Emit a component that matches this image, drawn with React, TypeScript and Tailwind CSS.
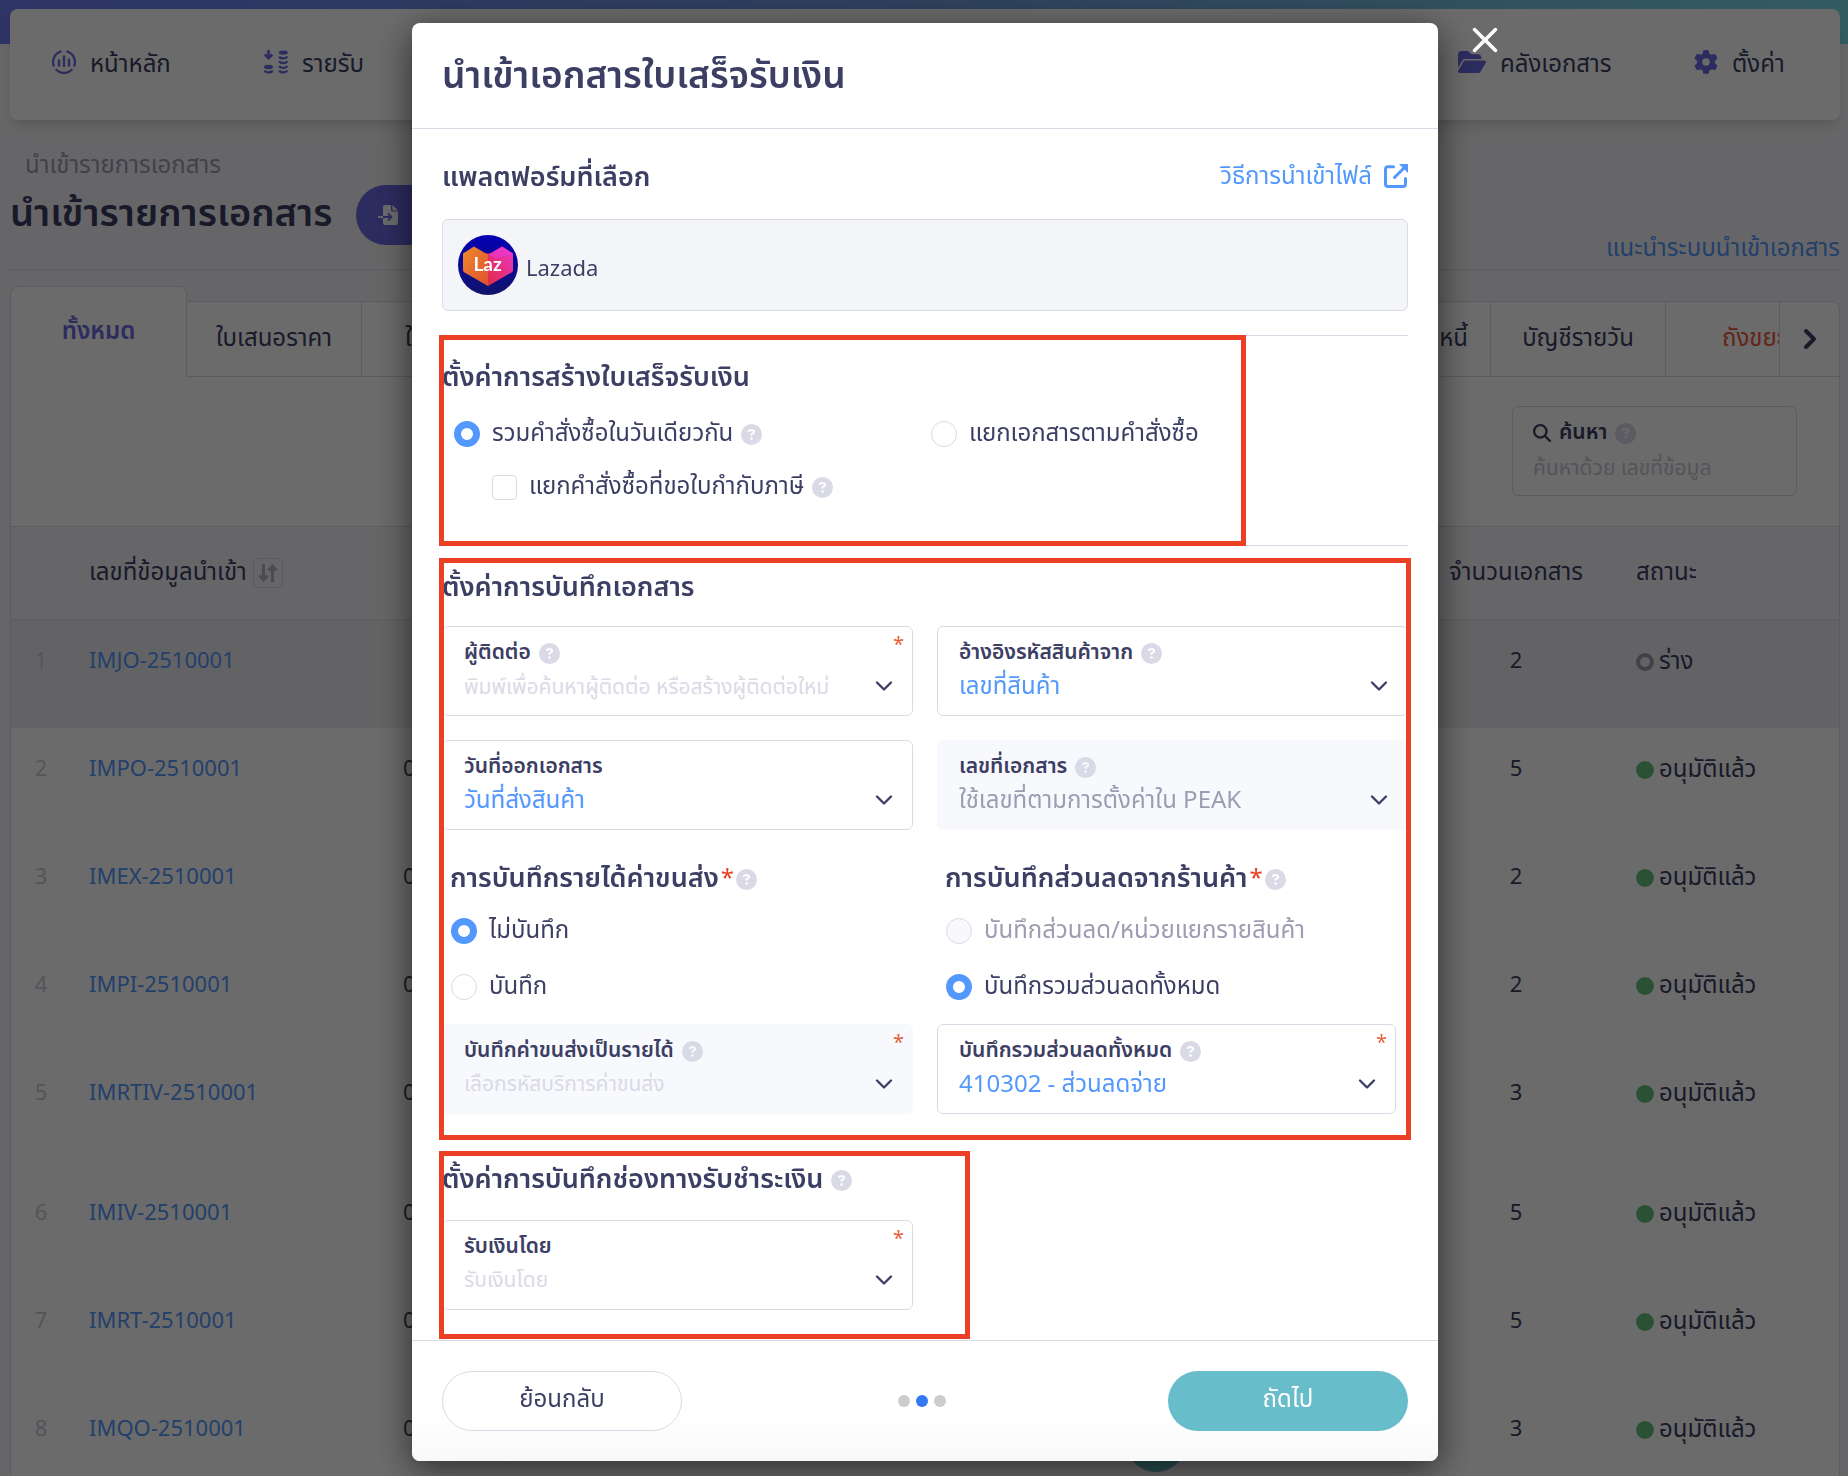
import React from 'react';
import { ChevronDown, ChevronRight, X } from 'lucide-react';
import { FaFolderOpen, FaGear, FaCircleQuestion, FaMagnifyingGlass } from 'react-icons/fa6';
import { clsx } from 'clsx';

interface ImportRow {
  id: string;
  date: string;
  count: number;
  status: 'draft' | 'approved';
}

const rows: ImportRow[] = [
  { id: 'IMJO-2510001', date: '', count: 2, status: 'draft' },
  { id: 'IMPO-2510001', date: '01/10/2025', count: 5, status: 'approved' },
  { id: 'IMEX-2510001', date: '01/10/2025', count: 2, status: 'approved' },
  { id: 'IMPI-2510001', date: '01/10/2025', count: 2, status: 'approved' },
  { id: 'IMRTIV-2510001', date: '01/10/2025', count: 3, status: 'approved' },
  { id: 'IMIV-2510001', date: '01/10/2025', count: 5, status: 'approved' },
  { id: 'IMRT-2510001', date: '01/10/2025', count: 5, status: 'approved' },
  { id: 'IMQO-2510001', date: '01/10/2025', count: 3, status: 'approved' },
];

const HomeIcon = () => (
  <svg viewBox="0 0 24 24" className="h-6 w-6 shrink-0" fill="none" stroke="currentColor" strokeWidth="2.2">
    <path d="M9.5 1.4A11 11 0 0 0 2 16.5M14.5 1.4A11 11 0 0 1 22 16.5M3.8 19.3A11 11 0 0 0 20.2 19.3" />
    <path d="M7 10.5v5M12 6.500v9.500M17 9.500v6" strokeWidth="2.4" strokeLinecap="round" />
  </svg>
);

const CoinsIcon = () => (
  <svg viewBox="0 0 24 24" className="h-6 w-6 shrink-0" fill="none" stroke="currentColor" strokeWidth="2.2">
    <path d="M4.5 0v7M.8 4.5l3.7 3.7 3.7-3.7" strokeWidth="2.6" />
    <ellipse cx="4.5" cy="17" rx="4.5" ry="2.2" fill="currentColor" stroke="none" />
    <ellipse cx="19.3" cy="2.6" rx="4.5" ry="2.2" fill="currentColor" stroke="none" />
    <path d="M.5 20.5c1 2.6 7 2.6 8 0M15.3 6.5c1 2.6 7 2.6 8 0M15.3 11.2c1 2.6 7 2.6 8 0M15.3 15.9c1 2.6 7 2.6 8 0M15.3 20.5c1 2.6 7 2.6 8 0" />
  </svg>
);

const ImportIcon = () => (
  <svg viewBox="0 0 20 20" className="h-5 w-5 shrink-0">
    <path d="M7 0h6v5a1.5 1.5 0 0 0 1.500 1.500H20V18a2 2 0 0 1-2 2H7a2 2 0 0 1-2-2V2a2 2 0 0 1 2-2z" fill="#fff" />
    <path d="M14.500 0 20 5.500h-5.500z" fill="#fff" />
    <path d="M5 12h8M10 8.500l3.500 3.500L10 15.500" fill="none" stroke="#6b69e3" strokeWidth="1.800" />
    <path d="M0 12h5" stroke="#fff" strokeWidth="1.800" />
  </svg>
);

const SortIcon = () => (
  <svg viewBox="0 0 20 20" className="h-5 w-5" fill="none" stroke="currentColor" strokeWidth="3">
    <path d="M5.500 1v16M1.500 12.500 5.500 17l4-4.500M14.500 19V3M10.500 7.500l4-4.500 4 4.500" />
  </svg>
);

const ExternalIcon = () => (
  <svg viewBox="0 0 24 24" className="h-6 w-6 shrink-0" fill="none" stroke="currentColor" strokeWidth="3">
    <path d="M9.500 2.800H4A2.500 2.500 0 0 0 1.500 5.300V20A2.500 2.500 0 0 0 4 22.500H19A2.500 2.500 0 0 0 21.500 20V14.500" strokeLinecap="round" />
    <path d="M10.500 13.500 20 4" strokeLinecap="round" />
    <path d="M15 0h9v9z" fill="currentColor" stroke="none" />
  </svg>
);

const LazadaLogo = () => (
  <svg viewBox="0 0 60 60" className="h-[60px] w-[60px] shrink-0" role="img" aria-label="Lazada">
    <defs>
      <linearGradient id="laz-bg" x1="0" y1="0" x2="0" y2="1">
        <stop offset="0" stopColor="#0500b5" />
        <stop offset="1" stopColor="#10146a" />
      </linearGradient>
      <linearGradient id="laz-left" x1="0" y1="0" x2="1" y2="1">
        <stop offset="0" stopColor="#ee8a2c" />
        <stop offset="1" stopColor="#e0512f" />
      </linearGradient>
      <linearGradient id="laz-right" x1="1" y1="0" x2="0" y2="1">
        <stop offset="0" stopColor="#ea35c8" />
        <stop offset="1" stopColor="#e22b42" />
      </linearGradient>
    </defs>
    <circle cx="30" cy="30" r="30" fill="url(#laz-bg)" />
    <path d="M5 18.500 16 11.500l11 6.500 3 .8V51L6.500 37.500a3 3 0 0 1-1.500-2.600z" fill="url(#laz-left)" />
    <path d="M55 18.500 44 11.500l-11 6.500-3 .8V51l23.500-13.500a3 3 0 0 0 1.500-2.600z" fill="url(#laz-right)" />
    <path d="m30 18.800 3-.8 11-6.500 11 7-17 5z" fill="#ec38dc" opacity=".55" />
    <text x="29.500" y="36" textAnchor="middle" fill="#fff" fontSize="19" fontWeight="700" fontFamily="Lato, sans-serif">
      Laz
    </text>
  </svg>
);

const Help = () => <FaCircleQuestion className="h-[21px] w-[21px] shrink-0 text-[#dadae6]" />;

const Highlight = ({ className }: { className: string }) => (
  <div className={clsx('pointer-events-none absolute border-5 border-[#eb4026]', className)} />
);

interface ChoiceProps {
  name: string;
  label: string;
  checked?: boolean;
  disabled?: boolean;
  help?: boolean;
}

const RadioChoice: React.FC<ChoiceProps> = ({ name, label, checked, disabled, help }) => (
  <div className="flex items-center gap-2">
    <label className={clsx('flex items-center gap-3 text-2xl leading-7', disabled && 'text-[#9c9cb2]')}>
      <input
        type="radio"
        name={name}
        defaultChecked={checked}
        disabled={disabled}
        className="h-[26px] w-[26px] shrink-0 appearance-none rounded-full border border-[#dadae6] bg-white checked:border-7 checked:border-[#5398fd] disabled:bg-[#f8f9fd]"
      />
      {label}
    </label>
    {help && <Help />}
  </div>
);

interface FieldProps {
  id: string;
  label: string;
  value: string;
  tone?: 'value' | 'placeholder' | 'muted';
  help?: boolean;
  required?: boolean;
  disabled?: boolean;
  search?: boolean;
  className?: string;
}

const Field: React.FC<FieldProps> = ({ id, label, value, tone = 'value', help, required, disabled, search, className }) => (
  <div
    className={clsx(
      'relative flex h-[90px] flex-col rounded-md border pt-[14px] pr-[14px] pl-[21px]',
      disabled ? 'border-[#f8f9fd] bg-[#f8f9fd]' : 'border-[#dadae6] bg-white',
      className
    )}
  >
    <div className="flex h-6 items-center gap-2">
      <label htmlFor={id} className="text-[21px] leading-6 font-semibold">{label}</label>
      {help && <Help />}
    </div>
    <div className="flex h-[42px] items-center">
      {search ? (
        <input
          id={id}
          type="text"
          placeholder={value}
          className="h-10 min-w-0 flex-1 bg-transparent pt-0.5 text-[21px] leading-9 outline-none placeholder:text-[#dadae6]"
        />
      ) : (
        <select
          id={id}
          disabled={disabled}
          className={clsx(
            'h-10 min-w-0 flex-1 appearance-none bg-transparent pt-0.5 leading-9 opacity-100 outline-none',
            tone === 'value' && 'text-2xl text-[#5398fd]',
            tone === 'muted' && 'text-2xl text-[#9c9cb2]',
            tone === 'placeholder' && 'text-[21px] text-[#dadae6]'
          )}
        >
          <option>{value}</option>
        </select>
      )}
      <ChevronDown className="pointer-events-none h-7 w-7 shrink-0" strokeWidth={2} />
    </div>
    {required && <span className="absolute top-[6px] right-2 text-xl leading-6 text-[#e8603c]">*</span>}
  </div>
);

const SectionTitle = ({ children }: { children: React.ReactNode }) => (
  <h3 className="text-[27px] leading-8 font-semibold">{children}</h3>
);

const Background = () => (
  <div className="h-screen overflow-hidden bg-[#f4f4f8] text-[#3c3e63]">
    <div className="h-11 bg-linear-to-r from-[#6f7cf0] via-[#7099dd] to-[#79dbe6] pt-[9px] pr-2 pl-[10px]">
      <nav className="flex h-[111px] rounded-lg bg-white px-[42px] pt-[35px] text-2xl leading-9 shadow-lg">
        <a href="#home" className="flex h-9 w-[212px] items-center gap-[14px]">
          <span className="text-[#6b69e3]"><HomeIcon /></span>
          <span className="pt-1.5">หน้าหลัก</span>
        </a>
        <a href="#income" className="flex h-9 flex-1 items-center gap-[14px]">
          <span className="text-[#6b69e3]"><CoinsIcon /></span>
          <span className="pt-1.5">รายรับ</span>
        </a>
        <a href="#files" className="flex h-9 w-[236px] items-center gap-[14px]">
          <FaFolderOpen className="h-7 w-7 text-[#6b69e3]" />
          <span className="pt-1.5">คลังเอกสาร</span>
        </a>
        <a href="#settings" className="flex h-9 w-[104px] items-center gap-[14px]">
          <FaGear className="h-6 w-6 text-[#6b69e3]" />
          <span className="pt-1.5">ตั้งค่า</span>
        </a>
      </nav>
    </div>

    <div className="pt-[106px] pr-2 pl-[10px]">
      <p className="px-[15px] text-2xl leading-8 text-[#9c9cb2]">นำเข้ารายการเอกสาร</p>
      <div className="flex items-start border-b border-[#dadae6] pt-[3px] pb-0.5">
        <h1 className="text-[38px] leading-[60px] font-semibold">นำเข้ารายการเอกสาร</h1>
        <button aria-label="นำเข้า" className="ml-6 flex h-[60px] w-[200px] items-center rounded-full bg-[#6b69e3] px-[22px]">
          <ImportIcon />
        </button>
        <a href="#guide" className="mt-[46px] ml-auto text-2xl leading-9 text-[#5398fd]">แนะนำระบบนำเข้าเอกสาร</a>
      </div>

      {/* Tabs */}
      <div className="mt-4 flex items-end text-2xl leading-9">
        <button className="h-[91px] w-[177px] rounded-t-lg border border-b-0 border-[#dadae6] bg-white font-semibold text-[#6b69e3]">ทั้งหมด</button>
        <div className="flex h-[76px] flex-1 rounded-tr-lg border border-l-0 border-[#dadae6] bg-white">
          <button className="w-[175px] border-r border-[#dadae6]">ใบเสนอราคา</button>
          <button className="flex-1 pl-[43px] text-left">ใบแจ้งหนี้</button>
          <button className="w-[175px] border-r border-[#dadae6] pr-[22px] text-right">ใบลดหนี้</button>
          <button className="w-[175px] border-r border-[#dadae6]">บัญชีรายวัน</button>
          <button className="w-[114px] overflow-hidden border-r border-[#dadae6] pl-[56px] text-left whitespace-nowrap text-[#ee5a3a]">ถังขยะ</button>
          <button aria-label="ถัดไป" className="flex w-[59px] items-center justify-center">
            <ChevronRight className="h-8 w-8" strokeWidth={3} />
          </button>
        </div>
      </div>

      <div className="border-x border-[#dadae6] bg-white">
        <div className="flex justify-end px-[42px] pt-[29px] pb-[30px]">
          <div className="h-[90px] w-[285px] rounded-md border border-[#dadae6] px-5 pt-3">
            <label htmlFor="search" className="flex items-center gap-2 text-[21px] leading-7 font-semibold">
              <FaMagnifyingGlass className="h-[18px] w-[18px]" />ค้นหา<Help />
            </label>
            <input id="search" placeholder="ค้นหาด้วย เลขที่ข้อมูล" className="h-11 w-full text-[21px] leading-11 placeholder:text-[#c9c9d6]" />
          </div>
        </div>
        <table className="w-full table-fixed text-left text-[22px]">
          <colgroup>
            <col className="w-[60px]" />
            <col className="w-[332px]" />
            <col />
            <col className="w-[160px]" />
            <col className="w-[243px]" />
          </colgroup>
          <thead>
            <tr className="h-[93px] border-y border-[#dadae6] bg-[#f4f4f8] text-2xl">
              <th />
              <th className="pl-[18px] font-normal">
                <span className="flex items-center gap-1.5">
                  เลขที่ข้อมูลนำเข้า
                  <button aria-label="เรียงลำดับ" className="rounded-sm border border-[#dadae6] p-1 text-[#b4b4c4]"><SortIcon /></button>
                </span>
              </th>
              <th />
              <th className="text-center font-normal">จำนวนเอกสาร</th>
              <th className="pl-10 font-normal">สถานะ</th>
            </tr>
          </thead>
          <tbody>
            {rows.map((row, i) => (
              <tr key={row.id} className={clsx('align-top leading-9', i === 4 ? 'h-[120px]' : 'h-[108px]', i === 0 && 'bg-[#ededf0]')}>
                <td className="pt-6 text-center text-[#c9c9d6]">{i + 1}</td>
                <td className="pt-6 pl-[18px]"><a href={`#${row.id}`} className="text-[#5398fd]">{row.id}</a></td>
                <td className="pt-6">{row.date}</td>
                <td className="pt-6 text-center">{row.count}</td>
                <td className="pt-6 pl-10 text-2xl leading-9">
                  <span className="flex items-center gap-[5px]">
                    <span className={clsx('h-[18px] w-[18px] rounded-full', row.status === 'draft' ? 'border-4 border-[#9c9cb2]' : 'bg-[#67c17c]')} />
                    {row.status === 'draft' ? 'ร่าง' : 'อนุมัติแล้ว'}
                  </span>
                </td>
              </tr>
            ))}
          </tbody>
        </table>
      </div>
    </div>
    <button aria-label="แชท" className="fixed right-[662px] bottom-1 h-[60px] w-[60px] rounded-full bg-[#67bdc9]" />
  </div>
);

export default function App() {
  return (
    <div className="font-['Noto_Sans_Thai','Noto_Sans',sans-serif]">
      <Background />
      <div className="fixed inset-0 flex items-start justify-center bg-black/58 pt-[23px] pl-0.5 text-[#3c3e63]">
        <div role="dialog" aria-labelledby="dialog-title" className="relative w-[1026px] rounded-lg bg-white shadow-[0_8px_36px_rgba(0,0,0,0.6)]">
          <button aria-label="ปิด" className="absolute -top-1 -right-[68px] text-white">
            <X className="h-[42px] w-[42px]" strokeWidth={2} />
          </button>

          <header className="border-b border-[#dadae6] px-[30px] pt-7 pb-6">
            <h2 id="dialog-title" className="text-[37px] leading-[53px] font-semibold">นำเข้าเอกสารใบเสร็จรับเงิน</h2>
          </header>

          <div className="px-[30px]">
            <div className="flex items-center justify-between pt-[33px] pb-[25px]">
              <SectionTitle>แพลตฟอร์มที่เลือก</SectionTitle>
              <a href="#how-to" className="flex h-8 items-center gap-3 pb-1 text-2xl leading-8 text-[#5398fd]">
                <span className="pt-0.5">วิธีการนำเข้าไฟล์</span><ExternalIcon />
              </a>
            </div>
            <div className="flex h-[92px] items-center gap-2 rounded-md border border-[#dadae6] bg-[#f4f5f8] px-[15px] text-[22px]">
              <LazadaLogo />
              <span className="pt-2">Lazada</span>
            </div>

            {/* Receipt creation */}
            <section className="relative mt-6 h-[211px] border-y border-[#dadae6] pt-[26px]">
              <SectionTitle>ตั้งค่าการสร้างใบเสร็จรับเงิน</SectionTitle>
              <div className="mt-[26px] grid grid-cols-2 items-start pl-3">
                <div>
                  <RadioChoice name="create" label="รวมคำสั่งซื้อในวันเดียวกัน" checked help />
                  <div className="mt-[25px] flex items-center gap-2 pl-[38px]">
                    <label className="flex items-center gap-3 text-2xl leading-7">
                      <input type="checkbox" className="h-[25px] w-[25px] shrink-0 appearance-none rounded-sm border border-[#dadae6] bg-white" />
                      แยกคำสั่งซื้อที่ขอใบกำกับภาษี
                    </label>
                    <Help />
                  </div>
                </div>
                <RadioChoice name="create" label="แยกเอกสารตามคำสั่งซื้อ" />
              </div>
              <Highlight className="-top-px right-[162px] -bottom-px -left-[3px]" />
            </section>

            {/* Document settings */}
            <section className="relative mt-3 h-[582px] pt-[14px]">
              <SectionTitle>ตั้งค่าการบันทึกเอกสาร</SectionTitle>
              <div className="mt-[22px] grid grid-cols-2 gap-6">
                <Field id="contact" label="ผู้ติดต่อ" value="พิมพ์เพื่อค้นหาผู้ติดต่อ หรือสร้างผู้ติดต่อใหม่" search help required />
                <Field id="sku" label="อ้างอิงรหัสสินค้าจาก" value="เลขที่สินค้า" help />
                <Field id="date" label="วันที่ออกเอกสาร" value="วันที่ส่งสินค้า" />
                <Field id="number" label="เลขที่เอกสาร" value="ใช้เลขที่ตามการตั้งค่าใน PEAK" tone="muted" help disabled />
              </div>
              <div className="mt-[33px] grid grid-cols-2 gap-6">
                <div>
                  <div className="flex items-center gap-0.5 pl-2">
                    <SectionTitle>การบันทึกรายได้ค่าขนส่ง</SectionTitle>
                    <span className="text-2xl leading-8 text-[#eb4026]">*</span>
                    <Help />
                  </div>
                  <div className="mt-[22px] mb-[23px] flex flex-col gap-7 pl-[9px]">
                    <RadioChoice name="shipping" label="ไม่บันทึก" checked />
                    <RadioChoice name="shipping" label="บันทึก" />
                  </div>
                  <Field id="shipping-code" label="บันทึกค่าขนส่งเป็นรายได้" value="เลือกรหัสบริการค่าขนส่ง" tone="placeholder" help required disabled />
                </div>
                <div>
                  <div className="flex items-center gap-0.5 pl-2">
                    <SectionTitle>การบันทึกส่วนลดจากร้านค้า</SectionTitle>
                    <span className="text-2xl leading-8 text-[#eb4026]">*</span>
                    <Help />
                  </div>
                  <div className="mt-[22px] mb-[23px] flex flex-col gap-7 pl-[9px]">
                    <RadioChoice name="discount" label="บันทึกส่วนลด/หน่วยแยกรายสินค้า" disabled />
                    <RadioChoice name="discount" label="บันทึกรวมส่วนลดทั้งหมด" checked />
                  </div>
                  <Field id="discount-code" label="บันทึกรวมส่วนลดทั้งหมด" value="410302 - ส่วนลดจ่าย" help required className="mr-3" />
                </div>
              </div>
              <Highlight className="top-0 -right-[3px] bottom-0 -left-[3px]" />
            </section>

            {/* Payment channel */}
            <section className="relative mt-[11px] mb-px h-[188px] pt-[13px]">
              <div className="flex items-center gap-2">
                <SectionTitle>ตั้งค่าการบันทึกช่องทางรับชำระเงิน</SectionTitle>
                <Help />
              </div>
              <div className="mt-6 grid grid-cols-2 gap-6">
                <Field id="payment" label="รับเงินโดย" value="รับเงินโดย" tone="placeholder" required />
              </div>
              <Highlight className="top-0 right-[438px] bottom-0 -left-[3px]" />
            </section>
          </div>

          <footer className="flex items-center justify-between rounded-b-lg border-t border-[#dadae6] bg-linear-to-b from-white from-60% to-[#f9f9f9] px-[30px] py-[30px] text-2xl">
            <button className="h-[60px] w-60 rounded-full border border-[#dadae6] bg-white pb-0.5">ย้อนกลับ</button>
            <div className="mr-1.5 flex gap-[6px]">
              <span className="h-3 w-3 rounded-full bg-[#cccccc]" />
              <span className="h-3 w-3 rounded-full bg-[#3478f6]" />
              <span className="h-3 w-3 rounded-full bg-[#cccccc]" />
            </div>
            <button className="h-[60px] w-60 rounded-full bg-[#67bdc9] pb-0.5 text-white">ถัดไป</button>
          </footer>
        </div>
      </div>
    </div>
  );
}
